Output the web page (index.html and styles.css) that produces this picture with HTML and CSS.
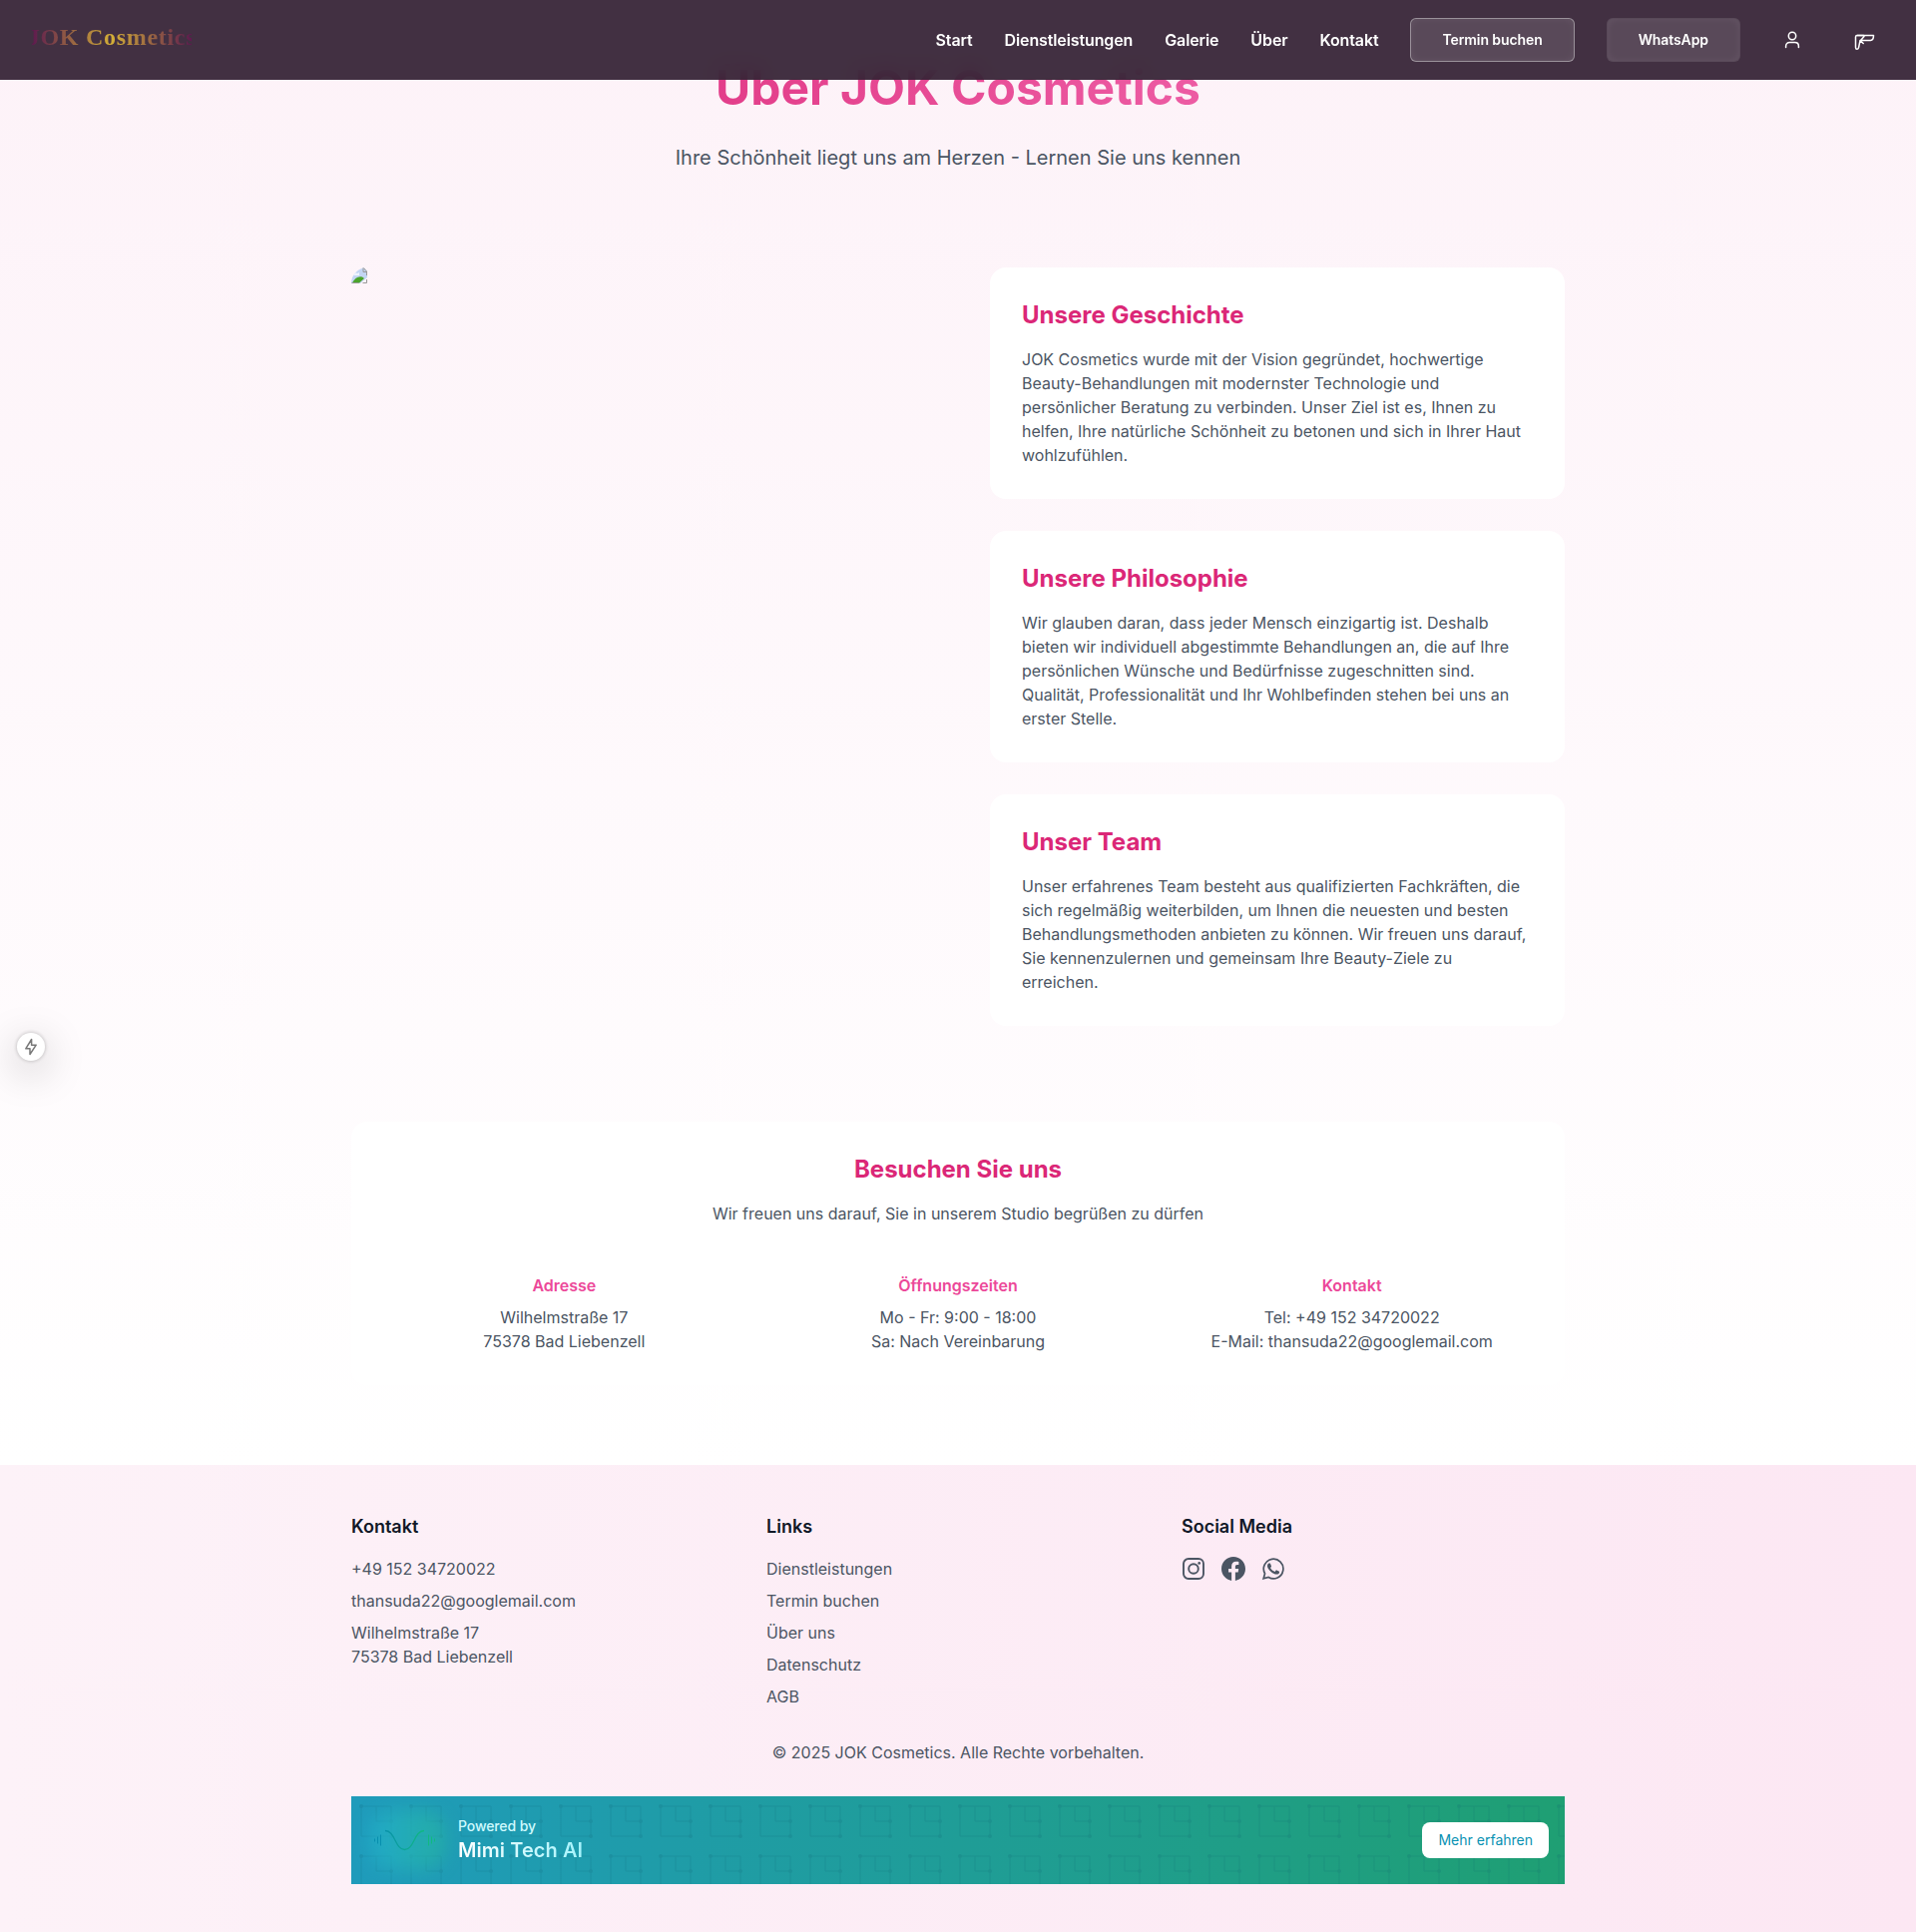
FILE: index.html
```html
<!DOCTYPE html>
<html lang="de">
<head>
<meta charset="utf-8">
<title>Über JOK Cosmetics</title>
<link rel="stylesheet" href="styles.css">
</head>
<body>
<header class="navbar">
  <a class="logo">JOK Cosmetics</a>
  <nav class="nav">
    <a>Start</a><a>Dienstleistungen</a><a>Galerie</a><a>Über</a><a>Kontakt</a>
    <a class="btn btn-outline">Termin buchen</a>
    <a class="btn">WhatsApp</a>
    <a class="nav-icon"><svg width="24" height="24" viewBox="0 0 24 24" fill="none" stroke="currentColor" stroke-width="1.5" stroke-linecap="round" stroke-linejoin="round"><circle cx="12" cy="8" r="3.7"/><path d="M5.6 19.6v-1.4c0-2.3 1.5-3.7 3.7-3.7h5.4c2.2 0 3.7 1.4 3.7 3.7v1.4"/></svg></a>
    <a class="nav-icon"><svg width="24" height="24" viewBox="0 0 24 24" fill="none" stroke="currentColor" stroke-width="1.5" stroke-linecap="round" stroke-linejoin="round"><path d="M11.5 7.5H5Q3.5 7.5 3.5 9V19.5Q3.5 21.3 5 21.3Q6.4 21.3 6.6 19.5L8 12.6L11.2 15.5"/><path d="M5 7.5H21.5Q21.5 12.3 18.5 12.4H8.5L12 8.5"/></svg></a>
  </nav>
</header>
<main class="about">
  <div class="container">
    <div class="hero">
      <h1>Über JOK Cosmetics</h1>
      <p>Ihre Schönheit liegt uns am Herzen - Lernen Sie uns kennen</p>
    </div>
    <div class="story">
      <div class="photo">
        <svg width="16" height="16" viewBox="0 0 16 16"><path d="M0 16V9L3 4L9 0H12L16 4V10L9 16Z" fill="#c3d5f3"/><path d="M2 7Q4 4 6 6L8 5V8H2Z" fill="#eef4ff"/><path d="M1 15.5Q5 8 11 9.5L13 11L8 15.5Z" fill="#4ba42c"/><path d="M10 0.5H12.5L15.5 4V8M12 1V4.5H15.5M0.5 15.5H7M11.5 15.5H15.5V12" fill="none" stroke="#999"/></svg>
      </div>
      <div class="cards">
        <article class="card"><h2>Unsere Geschichte</h2><p>JOK Cosmetics wurde mit der Vision gegründet, hochwertige Beauty-Behandlungen mit modernster Technologie und persönlicher Beratung zu verbinden. Unser Ziel ist es, Ihnen zu helfen, Ihre natürliche Schönheit zu betonen und sich in Ihrer Haut wohlzufühlen.</p></article>
        <article class="card"><h2>Unsere Philosophie</h2><p>Wir glauben daran, dass jeder Mensch einzigartig ist. Deshalb bieten wir individuell abgestimmte Behandlungen an, die auf Ihre persönlichen Wünsche und Bedürfnisse zugeschnitten sind. Qualität, Professionalität und Ihr Wohlbefinden stehen bei uns an erster Stelle.</p></article>
        <article class="card"><h2>Unser Team</h2><p>Unser erfahrenes Team besteht aus qualifizierten Fachkräften, die sich regelmäßig weiterbilden, um Ihnen die neuesten und besten Behandlungsmethoden anbieten zu können. Wir freuen uns darauf, Sie kennenzulernen und gemeinsam Ihre Beauty-Ziele zu erreichen.</p></article>
      </div>
    </div>
    <section class="card visit">
      <h2>Besuchen Sie uns</h2>
      <p>Wir freuen uns darauf, Sie in unserem Studio begrüßen zu dürfen</p>
      <div class="visit-grid">
        <div><h3>Adresse</h3><p>Wilhelmstraße 17<br>75378 Bad Liebenzell</p></div>
        <div><h3>Öffnungszeiten</h3><p>Mo - Fr: 9:00 - 18:00<br>Sa: Nach Vereinbarung</p></div>
        <div><h3>Kontakt</h3><p>Tel: +49 152 34720022<br>E-Mail: thansuda22@googlemail.com</p></div>
      </div>
    </section>
  </div>
</main>
<footer class="footer">
  <div class="container">
    <div class="footer-grid">
      <div><h3>Kontakt</h3><ul><li>+49 152 34720022</li><li>thansuda22@googlemail.com</li><li>Wilhelmstraße 17<br>75378 Bad Liebenzell</li></ul></div>
      <div><h3>Links</h3><ul><li>Dienstleistungen</li><li>Termin buchen</li><li>Über uns</li><li>Datenschutz</li><li>AGB</li></ul></div>
      <div><h3>Social Media</h3>
        <div class="social">
          <svg width="24" height="24" viewBox="0 0 24 24" fill="none" stroke="currentColor" stroke-width="1.9"><rect x="2" y="2" width="20" height="20" rx="5"/><circle cx="12" cy="12" r="4.8"/><circle cx="17.7" cy="6.4" r="1.35" fill="currentColor" stroke="none"/></svg>
          <svg width="24" height="24" viewBox="0 0 24 24" fill="currentColor"><path d="M24 12.073c0-6.627-5.373-12-12-12s-12 5.373-12 12c0 5.99 4.388 10.954 10.125 11.854v-8.385H7.078v-3.47h3.047V9.43c0-3.007 1.792-4.669 4.533-4.669 1.312 0 2.686.235 2.686.235v2.953H15.83c-1.491 0-1.956.925-1.956 1.874v2.25h3.328l-.532 3.47h-2.796v8.385C19.612 23.027 24 18.062 24 12.073z"/></svg>
          <svg width="24" height="24" viewBox="0 0 24 24" fill="currentColor"><path d="M17.472 14.382c-.297-.149-1.758-.867-2.03-.967-.273-.099-.471-.148-.67.15-.197.297-.767.966-.94 1.164-.173.199-.347.223-.644.075-.297-.15-1.255-.463-2.39-1.475-.883-.788-1.48-1.761-1.653-2.059-.173-.297-.018-.458.13-.606.134-.133.298-.347.446-.52.149-.174.198-.298.298-.497.099-.198.05-.371-.025-.52-.075-.149-.669-1.612-.916-2.207-.242-.579-.487-.5-.669-.51-.173-.008-.371-.01-.57-.01-.198 0-.52.074-.792.372-.272.297-1.04 1.016-1.04 2.479 0 1.462 1.065 2.875 1.213 3.074.149.198 2.096 3.2 5.077 4.487.709.306 1.262.489 1.694.625.712.227 1.36.195 1.871.118.571-.085 1.758-.719 2.006-1.413.248-.694.248-1.289.173-1.413-.074-.124-.272-.198-.57-.347z"/><path d="M2.1 21.9l1.45-5.1A9.8 9.8 0 1 1 7.2 20.5z" fill="none" stroke="currentColor" stroke-width="1.7"/></svg>
        </div>
      </div>
    </div>
    <p class="copyright">© 2025 JOK Cosmetics. Alle Rechte vorbehalten.</p>
    <div class="powered">
      <svg class="circuit" width="1216" height="88">
        <defs><pattern id="circuit" width="50" height="50" patternUnits="userSpaceOnUse"><path d="M10 10h30v15M10 10v30h30v-15M25 10v15h15" fill="none" stroke="currentColor"/><circle cx="10" cy="10" r="2" fill="currentColor"/><circle cx="40" cy="25" r="2" fill="currentColor"/><circle cx="40" cy="40" r="2" fill="currentColor"/></pattern></defs>
        <rect width="1216" height="88" fill="url(#circuit)"/>
      </svg>
      <div class="brand">
        <div class="wave">
          <svg width="64" height="24" viewBox="0 0 64 24" fill="none"><defs><linearGradient id="wave" x1="0" x2="1" y1="0" y2="0"><stop stop-color="#0891a9"/><stop offset="1" stop-color="#10b981"/></linearGradient></defs><path d="M12 2.5C22 2.5 22 21.5 31.5 21.5S41 2.5 51 2.5" stroke="url(#wave)" stroke-width="1.3"/><path d="M1.5 10.5v3M4.5 8.5v7M7.5 6.5v11" stroke="#078fae"/><path d="M55.5 6.5v11M58.5 8.5v7M61.5 10.5v3" stroke="#10b981"/></svg>
        </div>
        <div class="brand-text"><span>Powered by</span><strong>Mimi Tech AI</strong></div>
      </div>
      <a class="more">Mehr erfahren</a>
    </div>
  </div>
</footer>
<button class="fab" aria-label="Aktionen"><svg width="20" height="20" viewBox="0 0 20 20" fill="none" stroke="#777" stroke-width="1.5" stroke-linejoin="round"><path d="M10.6 2.5L4.8 11.8H9V17.5L15.2 8.2H10.6Z"/></svg></button>
</body>
</html>
```
FILE: styles.css
```css
* { box-sizing: border-box; }
body, h1, h2, h3, p, ul { margin: 0; padding: 0; }
body { font-family: Inter, "Liberation Sans", sans-serif; font-size: 16px; line-height: 24px; color: #4b5563; background: #fff; }
ul { list-style: none; }
svg { display: block; }
.container { width: 1216px; margin: 0 auto; }

.navbar { position: fixed; z-index: 10; top: 0; left: 0; right: 0; height: 80px; padding: 0 32px; display: flex; align-items: center; justify-content: space-between; background: rgba(45, 27, 46, 0.9); backdrop-filter: blur(10px); }
.logo { width: 160px; margin-top: -6px; display: flex; justify-content: center; white-space: nowrap; font-family: "Liberation Serif", serif; font-size: 24px; font-weight: 700; letter-spacing: 0.7px; line-height: 32px; background: linear-gradient(90deg, #5d1a4e, #d4af37 50%, #5d1a4e); -webkit-background-clip: text; background-clip: text; color: transparent; }
.nav { display: flex; align-items: center; gap: 32px; color: #fff; font-weight: 600; font-size: 16px; letter-spacing: -0.12px; }
.btn { height: 44px; padding: 0 31px; display: flex; align-items: center; border-radius: 6px; font-size: 14px; letter-spacing: -0.09px; background: rgba(255, 255, 255, 0.12); box-shadow: inset 0 0 10px rgba(255, 255, 255, 0.06); border: 1px solid transparent; }
.btn-outline { border-color: rgba(255, 255, 255, 0.4); }
.nav-icon { width: 40px; display: flex; justify-content: center; }

.about { height: 1468px; padding-top: 64px; background: linear-gradient(#fdf2f8, #fff); }
.hero { text-align: center; margin-bottom: 96px; }
.hero h1 { height: 80px; font-size: 48px; line-height: 48px; font-weight: 700; background: linear-gradient(90deg, #db2777, #f472b6); -webkit-background-clip: text; background-clip: text; color: transparent; }
.hero p { font-size: 20px; line-height: 28px; }
.story { display: grid; grid-template-columns: 1fr 1fr; gap: 64px; margin-bottom: 96px; }
.photo { border-radius: 16px; overflow: hidden; }
.cards { display: flex; flex-direction: column; gap: 32px; }
.card { padding: 32px; border-radius: 16px; background: #fff; }
.card h2 { margin-bottom: 16px; font-size: 24px; line-height: 32px; font-weight: 700; color: #db2777; }
.visit { text-align: center; }
.visit-grid { display: grid; grid-template-columns: repeat(3, 1fr); gap: 32px; margin-top: 48px; }
.visit h3 { margin-bottom: 8px; font-size: 16px; font-weight: 600; color: #ec4899; }

.footer { height: 468px; padding: 48px 0; background: linear-gradient(90deg, #fdf2f8, #fce7f3); }
.footer-grid { display: grid; grid-template-columns: repeat(3, 1fr); gap: 32px; }
.footer h3 { margin-bottom: 16px; font-size: 18px; line-height: 28px; font-weight: 600; color: #111827; }
.footer ul { display: flex; flex-direction: column; gap: 8px; }
.social { display: flex; gap: 16px; }
.copyright { margin: 32px 0; text-align: center; }
.powered { position: relative; height: 88px; padding: 0 16px; display: flex; align-items: center; justify-content: space-between; overflow: hidden; background: linear-gradient(90deg, #1f9bbb, #1f9f73); }
.circuit { position: absolute; inset: 0; color: #10596b; opacity: 0.17; }
.brand { position: relative; display: flex; align-items: center; gap: 11px; }
.wave { position: relative; width: 80px; height: 64px; padding-right: 4px; display: flex; align-items: center; justify-content: center; }
.wave::before { content: ""; position: absolute; inset: 2px; border-radius: 24px; background: linear-gradient(90deg, #22b0ce, #27b59f); opacity: 0.7; filter: blur(9px); }
.wave svg { position: relative; }
.brand-text { display: flex; flex-direction: column; }
.brand-text span { font-size: 14px; line-height: 20px; font-weight: 500; letter-spacing: -0.1px; color: #cffafe; }
.brand-text strong { font-size: 20px; line-height: 28px; font-weight: 600; letter-spacing: 0.06px; background: linear-gradient(90deg, #fff, #a5f3fc); -webkit-background-clip: text; background-clip: text; color: transparent; }
.more { position: relative; height: 36px; padding: 0 16px; border-radius: 8px; background: #fff; color: #0891b2; font-size: 14px; line-height: 36px; }

.fab { position: fixed; left: 17px; top: 1035px; width: 28px; height: 28px; padding: 0; display: flex; align-items: center; justify-content: center; border: 0; border-radius: 50%; background: #fff; box-shadow: 0 0 4px rgba(0, 0, 0, 0.25), 0 10px 40px rgba(0, 0, 0, 0.28); }
```
